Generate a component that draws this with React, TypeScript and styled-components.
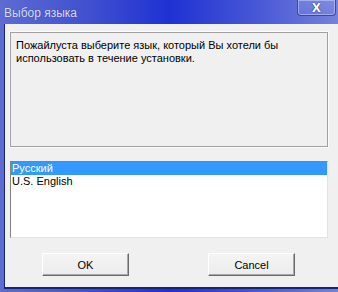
import React from "react";
import styled, { createGlobalStyle } from "styled-components";

const Global = createGlobalStyle`
  html, body { margin: 0; padding: 0; background: #f0f0f0; }
  body { width: 338px; height: 292px; overflow: hidden; font-family: "Liberation Sans", Arial, sans-serif; }
`;

const Window = styled.div`
  width: 338px;
  height: 292px;
  display: flex;
  flex-direction: column;
  background: linear-gradient(90deg, #5d6bd2 0%, #4252cf 25%, #1f31d3 50%, #4656d6 75%, #7581db 100%);
`;

const TitleBar = styled.div`
  height: 24px;
  display: flex;
  align-items: flex-start;
  justify-content: space-between;
  flex: none;
`;

const Title = styled.span`
  font-family: "Liberation Sans", Arial, sans-serif;
  font-size: 12px;
  color: #d6dbf2;
  padding: 6px 0 0 4px;
  text-shadow: 0 0 1px rgba(40, 50, 140, 0.6);
`;

const CloseButton = styled.div`
  width: 39px;
  height: 16px;
  margin-right: 2px;
  box-sizing: border-box;
  border: 1px solid #3a47a8;
  border-top: none;
  border-radius: 0 0 4px 4px;
  box-shadow: inset 0 0 0 1px rgba(200, 210, 255, 0.55);
  background: linear-gradient(180deg, rgba(150, 160, 230, 0.35), rgba(120, 130, 220, 0.25));
  display: flex;
  align-items: center;
  justify-content: center;
  color: #ffffff;
  font-family: "DejaVu Sans", sans-serif;
  font-weight: bold;
  font-size: 12px;
  line-height: 1;
  text-shadow: 0 0 1px #202860, 0 0 1px #202860;
`;

const Body = styled.div`
  flex: 1;
  display: flex;
  flex-direction: column;
  padding-left: 4px;
`;

const Client = styled.div`
  flex: 1;
  background: #f0f0f0;
  border-left: 1px solid #1b2470;
  border-bottom: 2px solid #1b2470;
  padding: 8px 10px 11px 5px;
  display: flex;
  flex-direction: column;
`;

const BottomEdge = styled.div`
  height: 3px;
  flex: none;
`;

const Panel = styled.div`
  height: 115px;
  box-sizing: border-box;
  border: 1px solid #a0a0a0;
  box-shadow: 0 0 0 1px #fbfbfb;
  background: #f0f0f0;
  padding: 6px 5px;
  font-size: 11px;
  line-height: 13px;
  color: #000;
`;

const ListBox = styled.div`
  margin-top: 14px;
  height: 77px;
  box-sizing: border-box;
  background: #ffffff;
  border-top: 1px solid #828282;
  border-left: 1px solid #828282;
  border-right: 1px solid #e3e3e3;
  border-bottom: 1px solid #e3e3e3;
  display: flex;
  flex-direction: column;
`;

const ListItem = styled.div<{ $selected?: boolean }>`
  height: 13px;
  line-height: 13px;
  font-size: 11px;
  padding-left: 1px;
  background: ${(p) => (p.$selected ? "#3399ff" : "transparent")};
  color: ${(p) => (p.$selected ? "#ffffff" : "#000000")};
`;

const ButtonRow = styled.div`
  margin-top: 15px;
  display: flex;
  padding-left: 32px;
  gap: 79px;
`;

const Button = styled.div`
  width: 87px;
  height: 23px;
  box-sizing: border-box;
  background: linear-gradient(180deg, #f4f4f4 0%, #ececec 100%);
  border-top: 1px solid #ffffff;
  border-left: 1px solid #ffffff;
  border-right: 1px solid #6a6a6a;
  border-bottom: 1px solid #6a6a6a;
  box-shadow: inset -1px -1px 0 #a8a8a8;
  display: flex;
  align-items: center;
  justify-content: center;
  font-size: 11px;
  color: #000;
`;

export default function App() {
  return (
    <>
      <Global />
      <Window>
        <TitleBar>
          <Title>Выбор языка</Title>
          <CloseButton>X</CloseButton>
        </TitleBar>
        <Body>
          <Client>
            <Panel>
              Пожайлуста выберите язык, который Вы хотели бы
              <br />
              использовать в течение установки.
            </Panel>
            <ListBox>
              <ListItem $selected>Русский</ListItem>
              <ListItem>U.S. English</ListItem>
            </ListBox>
            <ButtonRow>
              <Button>OK</Button>
              <Button>Cancel</Button>
            </ButtonRow>
          </Client>
          <BottomEdge />
        </Body>
      </Window>
    </>
  );
}
